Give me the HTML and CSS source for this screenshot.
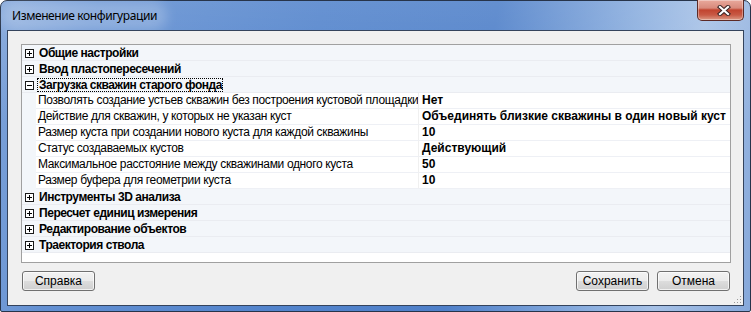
FILE: index.html
```html
<!DOCTYPE html>
<html lang="ru">
<head>
    <meta charset="UTF-8">
    <title>Изменение конфигурации</title>
    <link rel="stylesheet" href="styles.css">
</head>
<body>
    <div class="window">
        <div class="titlebar">
            <span class="title">Изменение конфигурации</span>
            <div class="close-btn">
                <svg width="14" height="11" viewBox="0 0 14 11">
                    <path d="M3 2 L11 9 M11 2 L3 9" stroke="#3a2424" stroke-width="4.2" stroke-linecap="square"/>
                    <path d="M3 2 L11 9 M11 2 L3 9" stroke="#ffffff" stroke-width="2.2" stroke-linecap="square"/>
                </svg>
            </div>
        </div>

        <div class="client">
            <div class="grid">
                <div class="row cat"><span class="toggle plus"></span><span class="name">Общие настройки</span></div>
                <div class="row cat"><span class="toggle plus"></span><span class="name">Ввод пластопересечений</span></div>
                <div class="row cat"><span class="toggle minus"></span><span class="name focused">Загрузка скважин старого фонда</span></div>

                <div class="row prop"><span class="label">Позволять создание устьев скважин без построения кустовой площадки</span><span class="value">Нет</span></div>
                <div class="row prop"><span class="label">Действие для скважин, у которых не указан куст</span><span class="value">Объединять близкие скважины в один новый куст</span></div>
                <div class="row prop"><span class="label">Размер куста при создании нового куста для каждой скважины</span><span class="value">10</span></div>
                <div class="row prop"><span class="label">Статус создаваемых кустов</span><span class="value">Действующий</span></div>
                <div class="row prop"><span class="label">Максимальное расстояние между скважинами одного куста</span><span class="value">50</span></div>
                <div class="row prop"><span class="label">Размер буфера для геометрии куста</span><span class="value">10</span></div>

                <div class="row cat"><span class="toggle plus"></span><span class="name">Инструменты 3D анализа</span></div>
                <div class="row cat"><span class="toggle plus"></span><span class="name">Пересчет единиц измерения</span></div>
                <div class="row cat"><span class="toggle plus"></span><span class="name">Редактирование объектов</span></div>
                <div class="row cat"><span class="toggle plus"></span><span class="name">Траектория ствола</span></div>
            </div>

            <div class="button-row">
                <button class="btn">Справка</button>
                <div class="spacer"></div>
                <button class="btn">Сохранить</button>
                <button class="btn">Отмена</button>
            </div>

            <svg class="grip" width="9" height="9" viewBox="0 0 9 9">
                <rect x="7" y="1" width="1" height="1" fill="#9a9a9a"/>
                <rect x="4" y="4" width="1" height="1" fill="#9a9a9a"/>
                <rect x="7" y="4" width="1" height="1" fill="#9a9a9a"/>
                <rect x="1" y="7" width="1" height="1" fill="#9a9a9a"/>
                <rect x="4" y="7" width="1" height="1" fill="#9a9a9a"/>
                <rect x="7" y="7" width="1" height="1" fill="#9a9a9a"/>
            </svg>
        </div>
    </div>
</body>
</html>
```

FILE: styles.css
```css
body {
    margin: 0;
    padding: 0;
    background-color: #ffffff;
    font-family: "Liberation Sans", Arial, sans-serif;
}

.window {
    box-sizing: border-box;
    width: 751px;
    height: 312px;
    padding: 0 6px 5px 6px;
    border: 1px solid #27344a;
    border-radius: 7px 7px 2px 2px;
    background:
        linear-gradient(to bottom, rgba(255, 255, 255, 0.12), rgba(255, 255, 255, 0) 40%),
        linear-gradient(100deg, #7ea3d9 0%, #6390d2 12%, #5384cc 40%, #4f80c9 62%, #8cafdf 80%, #a6c1e6 88%, #86a8da 100%);
    display: flex;
    flex-direction: column;
}

.titlebar {
    height: 29px;
    display: flex;
    align-items: center;
    padding-left: 3px;
}

.title {
    font-family: "Noto Sans", sans-serif;
    font-size: 12px;
    letter-spacing: -0.4px;
    color: #000000;
    padding: 0 2px;
    background-color: rgba(255, 255, 255, 0.2);
    box-shadow: 0 0 12px 8px rgba(255, 255, 255, 0.22);
    border-radius: 10px;
    line-height: 14px;
}

.close-btn {
    box-sizing: border-box;
    margin-left: auto;
    align-self: flex-start;
    margin-top: -1px;
    width: 47px;
    height: 21px;
    border: 1px solid #5c2a26;
    border-top: none;
    border-radius: 0 0 5px 5px;
    background: linear-gradient(to bottom, #e9a99c 0%, #d88a7c 40%, #c1442f 50%, #c85a45 75%, #dc9a85 100%);
    box-shadow: inset 0 0 0 1px rgba(255, 255, 255, 0.35);
    display: flex;
    align-items: center;
    justify-content: center;
    padding-left: 6px;
}

.client {
    position: relative;
    flex: 1;
    border: 1px solid #34435c;
    background-color: #f0f0f0;
    padding: 13px 12px 14px 13px;
    display: flex;
    flex-direction: column;
}

.grid {
    height: 217px;
    border: 1px solid #a0a0a0;
    background-color: #ffffff;
    font-size: 12px;
    color: #000000;
}

.row {
    box-sizing: border-box;
    height: 16px;
    display: flex;
    align-items: center;
    border-bottom: 1px solid #eaecf1;
}

.row.cat {
    background-color: #f3f6fa;
    font-weight: bold;
}

.toggle {
    box-sizing: border-box;
    position: relative;
    width: 9px;
    height: 9px;
    margin-left: 3px;
    margin-top: 1px;
    border: 1px solid #1a1a1a;
    background-color: #ffffff;
}

.toggle::before {
    content: "";
    position: absolute;
    left: 1px;
    top: 3px;
    width: 5px;
    height: 1px;
    background-color: #000000;
}

.toggle.plus::after {
    content: "";
    position: absolute;
    left: 3px;
    top: 1px;
    width: 1px;
    height: 5px;
    background-color: #000000;
}

.name {
    margin-left: 3px;
    padding: 0 1px 0 2px;
    line-height: 14px;
    letter-spacing: -0.45px;
}

.name.focused {
    outline: 1px dotted #000000;
    outline-offset: -1px;
}

.row.prop {
    padding-left: 14px;
    background-color: #f3f6fa;
    border-bottom: none;
}

.label,
.value {
    box-sizing: border-box;
    height: 16px;
    line-height: 15px;
    background-color: #ffffff;
    border-bottom: 1px solid #eef0f5;
    white-space: nowrap;
    overflow: hidden;
}

.label {
    width: 383px;
    padding-left: 2px;
    letter-spacing: -0.35px;
    border-right: 1px solid #f0f0f0;
}

.value {
    flex: 1;
    padding-left: 3px;
    font-weight: bold;
}

.button-row {
    display: flex;
    margin: 8px 1px 0 1px;
    gap: 8px;
}

.spacer {
    flex: 1;
}

.btn {
    width: 73px;
    height: 20px;
    padding: 0;
    border: 1px solid #707070;
    border-radius: 3px;
    background: linear-gradient(to bottom, #f2f2f2 0%, #ebebeb 50%, #dddddd 51%, #cfcfcf 100%);
    box-shadow: inset 0 0 0 1px rgba(255, 255, 255, 0.7);
    font-family: "Liberation Sans", Arial, sans-serif;
    font-size: 12px;
    color: #000000;
}

.grip {
    position: absolute;
    right: 1px;
    bottom: 1px;
}
```
